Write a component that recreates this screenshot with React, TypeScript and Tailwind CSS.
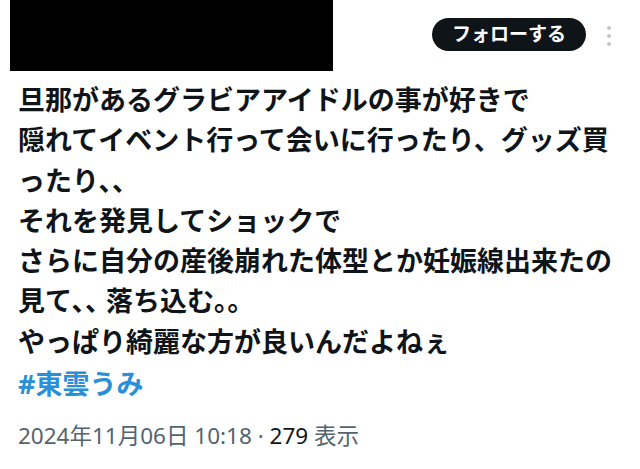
export default function App() {
  return (
    <div className="w-[640px] h-[469px] bg-white overflow-hidden" style={{ fontFamily: '"Noto Sans", "Noto Sans CJK JP", sans-serif' }}>
      {/* Header */}
      <div className="flex items-start">
        <div className="ml-[10px] w-[323px] h-[71px] bg-black" />
        <button className="ml-[99px] mt-[18px] h-[33px] w-[154px] rounded-full bg-[#0f1419] text-white text-[19px] font-bold leading-none flex items-center justify-center">
          フォローする
        </button>
        <div className="ml-[21px] mt-[26px] flex flex-col gap-[4px]">
          <span className="w-[4px] h-[4px] rounded-full bg-[#c4c8cc]" />
          <span className="w-[4px] h-[4px] rounded-full bg-[#c4c8cc]" />
          <span className="w-[4px] h-[4px] rounded-full bg-[#c4c8cc]" />
        </div>
      </div>

      {/* Body */}
      <div className="mt-[9px] pl-[18px] w-[620px] text-[27px] leading-[40.3px] font-bold text-[#0f1419] whitespace-pre-line">
        {`旦那があるグラビアアイドルの事が好きで
隠れてイベント行って会いに行ったり、グッズ買ったり､､
それを発見してショックで
さらに自分の産後崩れた体型とか妊娠線出来たの見て､､ 落ち込む｡｡
やっぱり綺麗な方が良いんだよねぇ`}
      </div>
      <div className="mt-[2px] pl-[18px] text-[27px] leading-[40px] font-bold text-[#2a8fd6]">#東雲うみ</div>

      {/* Meta */}
      <div className="mt-[17px] pl-[18px] text-[22.5px] leading-[30px] text-[#536471]">
        2024年11月06日 10:18 · <span className="text-[#0f1419]">279</span> 表示
      </div>
    </div>
  );
}
